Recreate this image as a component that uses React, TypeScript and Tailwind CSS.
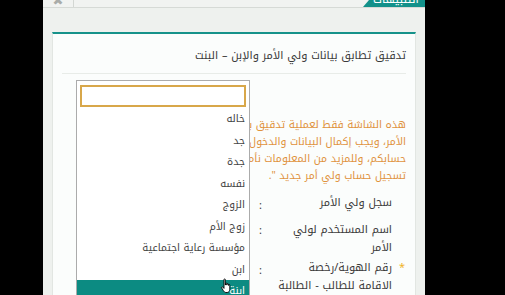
import React from "react";

const options = ["خاله", "جد", "جدة", "نفسه", "الزوج", "زوج الأم", "مؤسسة رعاية اجتماعية", "ابن"];

const Hand = () => (
  <svg width="13" height="16" viewBox="0 0 13 16" className="absolute left-[167px] top-[244px]">
    <path
      d="M4 1.5c0-.8 1.3-.8 1.3 0V7h.2V5.6c0-.8 1.3-.8 1.3 0V7h.2V6.2c0-.8 1.3-.8 1.3 0V7.4h.2V7c0-.8 1.3-.8 1.3 0v4.2c0 1.6-1 3.3-2.6 3.3H6c-1.2 0-1.9-.8-2.6-1.8L1.6 9.9c-.5-.8.5-1.5 1.2-.8L4 10.4z"
      fill="#fff"
      stroke="#000"
      strokeWidth="0.9"
    />
  </svg>
);

const App = () => {
  return (
    <div className="w-[505px] h-[295px] bg-black flex overflow-hidden font-['Noto_Kufi_Arabic','DejaVu_Sans',sans-serif]">
      <div className="ml-[43px] w-[382px] h-full bg-[#eef1ee] flex flex-col">
        <div className="h-[15px] flex justify-between bg-[#f1f3f1] border-b border-[#d6dad6] overflow-hidden">
          <div className="w-[31px] border-r border-[#d3d7d3] flex justify-center">
            <span className="text-[#a9aca9] text-[13px] font-bold leading-none -mt-[6px] font-['DejaVu_Sans',sans-serif]">✖</span>
          </div>
          <div className="w-[62px] bg-[#12918a] [clip-path:polygon(6px_0,100%_0,100%_100%,0_100%)] flex justify-center">
            <span dir="rtl" className="text-white text-[11.5px] leading-none -mt-[6px] pl-[4px]">التنبيهات</span>
          </div>
        </div>

        <div className="px-[9px] pt-[24px] flex-1">
          <div dir="rtl" className="relative h-full bg-[#fbfdfc] border-t-2 border-[#16928a] border-x border-x-[#e2e6e2]">
            <div className="px-[9px] pt-[12px]">
              <h2 className="text-right text-[11px] leading-[20px] text-[#3a3a3a] pb-[7px] border-b border-[#e8ece8]">
                تدقيق تطابق بيانات ولي الأمر والإبن – البنت
              </h2>

              <div className="mt-[42px] w-[158px] overflow-hidden text-right text-[10.5px] leading-[17px] text-[#e0923c] whitespace-nowrap">
                <div>هذه الشاشة فقط لعملية تدقيق بيانات ولي الأمر</div>
                <div>الأمر، ويجب إكمال البيانات والدخول إلى النظام</div>
                <div>حسابكم، وللمزيد من المعلومات نأمل الاطلاع</div>
                <div>تسجيل حساب ولي أمر جديد ".</div>
              </div>

              <div className="mt-[10px] text-[11px] leading-[18px] text-[#3b3b3b]">
                <div className="flex mb-[6px]">
                  <span className="w-[14px]" />
                  <span className="w-[124px]">سجل ولي الأمر</span>
                  <span className="pr-[6px] pt-[3px]">:</span>
                </div>
                <div className="flex mb-[2px]">
                  <span className="w-[14px]" />
                  <span className="w-[124px]">
                    اسم المستخدم لولي
                    <br />
                    الأمر
                  </span>
                  <span className="pr-[6px] pt-[1px]">:</span>
                </div>
                <div className="flex">
                  <span className="w-[14px] pr-[1px] text-[#f0b429] text-[11px]">*</span>
                  <span className="w-[124px] whitespace-nowrap">
                    رقم الهوية/رخصة
                    <br />
                    الاقامة للطالب - الطالبة
                  </span>
                  <span className="pr-[6px] pt-[3px]">:</span>
                </div>
              </div>
            </div>

            <div className="absolute left-[23px] top-[46px] w-[174px] h-[220px] bg-white border border-[#ababab] border-b-0">
              <div className="px-[3px] pt-[4px]">
                <div className="h-[22px] border-2 border-[#d8a74a] bg-white" />
              </div>
              <ul className="mt-[1px] text-[10.25px] text-[#444] leading-[21.5px]">
                {options.map((o) => (
                  <li key={o} className="pr-[4px] text-right">
                    {o}
                  </li>
                ))}
                <li className="pr-[4px] text-right bg-[#0c8b82] text-white">ابنة</li>
              </ul>
            </div>
            <Hand />
          </div>
        </div>
      </div>
    </div>
  );
};

export default App;
